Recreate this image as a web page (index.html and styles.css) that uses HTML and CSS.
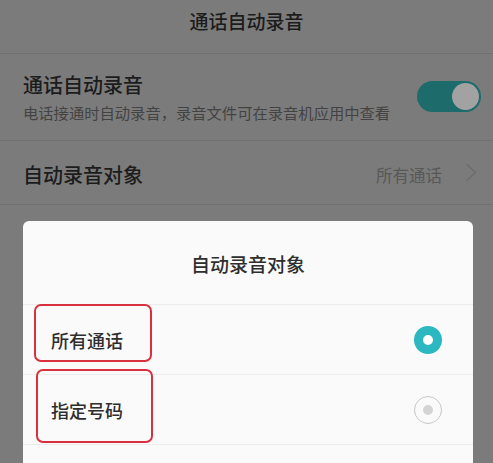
FILE: index.html
```html
<!DOCTYPE html>
<html lang="zh-CN">
<head>
<meta charset="utf-8">
<title>通话自动录音</title>
<link rel="stylesheet" href="styles.css">
</head>
<body>
<div class="page">
  <header class="header">通话自动录音</header>
  <div class="row row-switch">
    <div class="row-text">
      <div class="row-title">通话自动录音</div>
      <div class="row-sub">电话接通时自动录音，录音文件可在录音机应用中查看</div>
    </div>
    <div class="toggle"><span class="knob"></span></div>
  </div>
  <div class="row row-link">
    <div class="row-title">自动录音对象</div>
    <div class="row-value">
      <span>所有通话</span>
      <svg class="chev" width="12" height="19" viewBox="0 0 12 19"><path d="M1.5 1 L10.5 9.5 L1.5 18" fill="none" stroke="#6c6c6c" stroke-width="1.4"/></svg>
    </div>
  </div>
</div>

<div class="dialog">
  <div class="dialog-title">自动录音对象</div>
  <div class="option">
    <span class="option-label">所有通话</span>
    <span class="radio radio-on"></span>
    <span class="mark mark-1"></span>
  </div>
  <div class="option">
    <span class="option-label">指定号码</span>
    <span class="radio radio-off"><span class="dot"></span></span>
    <span class="mark mark-2"></span>
  </div>
  <div class="option option-empty"></div>
</div>
</body>
</html>
```
FILE: styles.css
```css
html, body {
  margin: 0;
  padding: 0;
  overflow: hidden;
}
body {
  width: 493px;
  height: 463px;
  background: #7b7b7b;
  font-family: "Noto Sans CJK SC", "Noto Sans", sans-serif;
  position: relative;
}
.page {
  display: flex;
  flex-direction: column;
}
.header {
  height: 53px;
  line-height: 42px;
  text-align: center;
  font-size: 19px;
  font-weight: 500;
  color: #1c1c1c;
  border-bottom: 1px solid #717171;
}
.row {
  display: flex;
  align-items: center;
  justify-content: space-between;
  padding: 0 12px 0 23px;
  border-bottom: 1px solid #717171;
}
.row-switch {
  height: 87px;
  box-sizing: border-box;
}
.row-text {
  display: flex;
  flex-direction: column;
  gap: 3px;
}
.row-title {
  font-size: 20px;
  font-weight: 500;
  line-height: 26px;
  color: #1c1c1c;
}
.row-sub {
  font-size: 15.3px;
  line-height: 22px;
  color: #434343;
}
.toggle {
  width: 64px;
  height: 31px;
  border-radius: 16px;
  background: #1e6b6b;
  display: flex;
  align-items: center;
  justify-content: flex-end;
  padding: 0 2px;
  box-sizing: border-box;
  margin-top: -2px;
}
.knob {
  width: 27px;
  height: 27px;
  border-radius: 50%;
  background: #a2a2a2;
}
.row-link {
  height: 64px;
  box-sizing: border-box;
  padding-top: 4px;
  padding-right: 16px;
}
.row-value {
  display: flex;
  align-items: center;
  gap: 23px;
  font-size: 16.5px;
  color: #585858;
}
.chev {
  display: block;
  margin-top: -4px;
}
.dialog {
  position: absolute;
  top: 221px;
  left: 23px;
  width: 450px;
  background: #fafafa;
  border-radius: 6px 6px 0 0;
  display: flex;
  flex-direction: column;
}
.dialog-title {
  height: 84px;
  box-sizing: border-box;
  padding-top: 2px;
  display: flex;
  align-items: center;
  justify-content: center;
  font-size: 19px;
  font-weight: 500;
  color: #2e2e2e;
  border-bottom: 1px solid #ececec;
}
.option {
  position: relative;
  height: 70px;
  box-sizing: border-box;
  display: flex;
  align-items: center;
  justify-content: space-between;
  padding: 0 31px 0 28px;
  border-bottom: 1px solid #ececec;
}
.option-label {
  font-size: 18px;
  font-weight: 500;
  color: #2e2e2e;
}
.radio {
  width: 28px;
  height: 28px;
  border-radius: 50%;
  box-sizing: border-box;
  display: flex;
  align-items: center;
  justify-content: center;
}
.radio-on {
  border: 9px solid #2cb8c1;
  background: #fff;
}
.radio-off {
  border: 1.5px solid #c8c8c8;
}
.dot {
  width: 10px;
  height: 10px;
  border-radius: 50%;
  background: #d4d4d4;
}
.mark {
  position: absolute;
  border: 2px solid #d8313d;
  border-radius: 7px;
  box-sizing: border-box;
}
.mark-1 {
  left: 11px;
  top: -1px;
  width: 118px;
  height: 58px;
}
.mark-2 {
  left: 13px;
  top: -6px;
  width: 117px;
  height: 74px;
}
```
